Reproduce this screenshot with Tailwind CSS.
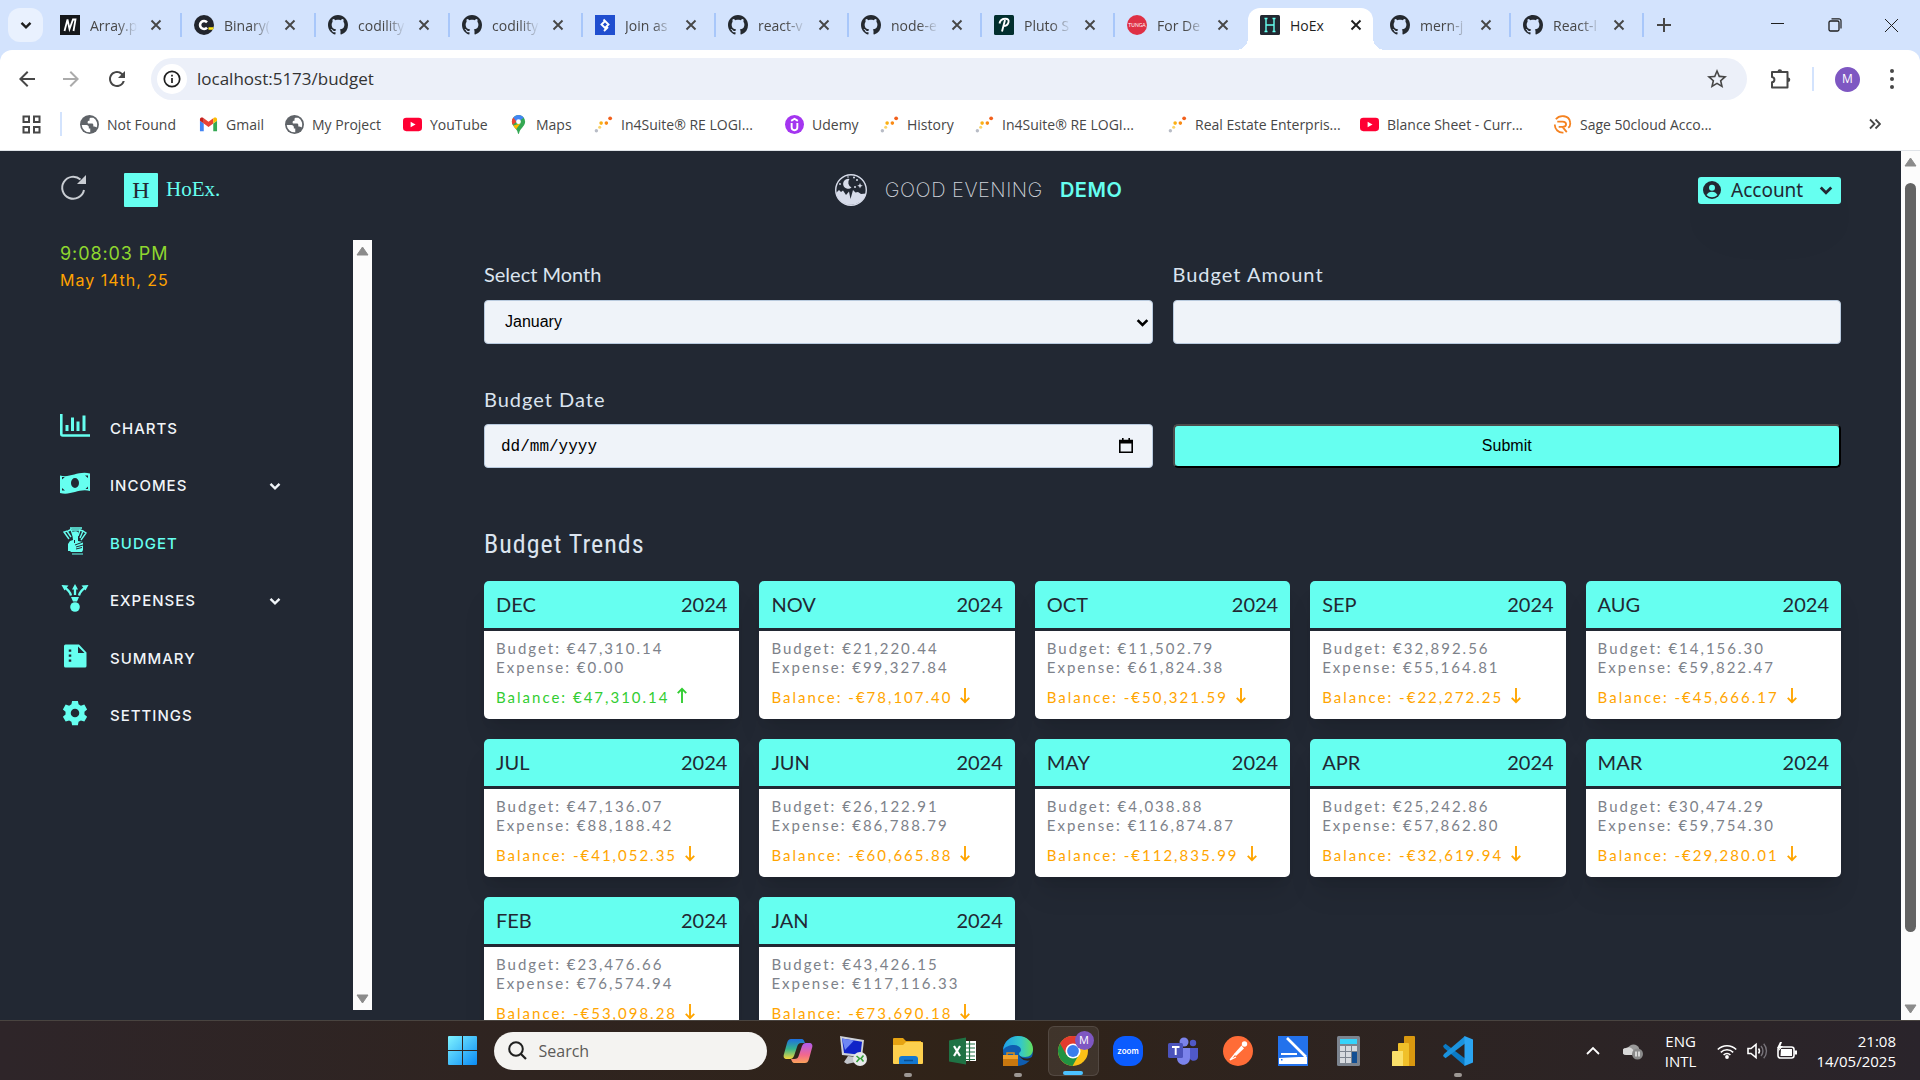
<!DOCTYPE html>
<html lang="en">
<head>
<meta charset="utf-8">
<title>HoEx</title>
<script src="https://cdn.jsdelivr.net/npm/@tailwindcss/browser@4"></script>
</head>
<body class="flex h-screen flex-col overflow-hidden bg-white font-['Open_Sans',sans-serif]">

<svg class="hidden" aria-hidden="true">
  <symbol id="github" viewBox="0 0 16 16"><path fill="#24292f" d="M8 0C3.58 0 0 3.58 0 8c0 3.54 2.29 6.53 5.47 7.59.4.07.55-.17.55-.38 0-.19-.01-.82-.01-1.49-2.01.37-2.53-.49-2.69-.94-.09-.23-.48-.94-.82-1.13-.28-.15-.68-.52-.01-.53.63-.01 1.08.58 1.23.82.72 1.21 1.87.87 2.33.66.07-.52.28-.87.51-1.07-1.78-.2-3.64-.89-3.64-3.95 0-.87.31-1.59.82-2.15-.08-.2-.36-1.02.08-2.12 0 0 .67-.21 2.2.82.64-.18 1.32-.27 2-.27s1.36.09 2 .27c1.53-1.04 2.2-.82 2.2-.82.44 1.1.16 1.92.08 2.12.51.56.82 1.27.82 2.15 0 3.07-1.87 3.75-3.65 3.95.29.25.54.73.54 1.48 0 1.07-.01 1.93-.01 2.2 0 .21.15.46.55.38A8.01 8.01 0 0 0 16 8c0-4.42-3.58-8-8-8z"/></symbol>
  <symbol id="medium" viewBox="0 0 20 20"><rect width="20" height="20" fill="#15171a"/><path d="M4.500 16 7.500 4.500 9.500 14 13 4.500h2.500L13.500 16" fill="none" stroke="#fff" stroke-width="1.800"/></symbol>
  <symbol id="codility" viewBox="0 0 20 20"><circle cx="10" cy="10" r="10" fill="#22252d"/><path d="M13 7.300a4 4 0 1 0 0 5.400" fill="none" stroke="#fff" stroke-width="2.600"/><path d="M14.500 12.300h5.200l-.8 2.500h-4.400z" fill="#ffe81a"/></symbol>
  <symbol id="toptal" viewBox="0 0 20 20"><rect width="20" height="20" fill="#204ecf"/><path d="m8.500 4.500 5 5-3.500 3.500-3.500-3.500L10 6M9 16l4-4" fill="none" stroke="#fff" stroke-width="1.900"/></symbol>
  <symbol id="pluto" viewBox="0 0 20 20"><rect width="20" height="20" rx="1.500" fill="#022f2e"/><path d="M8 16.500 11 5M5.500 8.500C6 5 9 3.700 11.500 3.700c2.500 0 3.500 1.500 3 3.500-.6 2.400-2.800 3.800-5.300 3.800" fill="none" stroke="#fff" stroke-width="1.900"/></symbol>
  <symbol id="tunga" viewBox="0 0 20 20"><circle cx="10" cy="10" r="10" fill="#df3045"/><text x="10" y="12" text-anchor="middle" font-size="5" font-family="Lato" fill="#fff">TUNGA</text></symbol>
  <symbol id="hoex" viewBox="0 0 20 20"><rect width="20" height="20" rx="1.500" fill="#222831"/><path d="M6 3.500v13M14 3.500v13M6 10h8M4.500 3.500h3M12.500 3.500h3M4.500 16.500h3M12.500 16.500h3" stroke="#66fff0" stroke-width="1.400"/></symbol>
  <symbol id="x" viewBox="0 0 12 12"><path d="m1.500 1.500 9 9m0-9-9 9" fill="none" stroke="currentColor" stroke-width="1.900"/></symbol>
  <symbol id="chev" viewBox="0 0 12 12"><path d="m1.500 3.800 4.500 4.500 4.500-4.500" fill="none" stroke="currentColor" stroke-width="2.400"/></symbol>
  <symbol id="globe" viewBox="0 0 20 20"><circle cx="10" cy="10" r="10" fill="#5f6368"/><path fill="#fff" d="M1.800 10.500h5c1.500 0 2.500 1 2.500 2.300v1.400h1.500v4a8.300 8.300 0 0 1-9-7.700zM8 7.500c0-1 .8-1.500 2-1.500V4.500c0-1 .7-1.500 2-1.500h2a8.300 8.300 0 0 1 3.500 10.200c-1-.7-2-1-3.500-1V10.500c0-1-.6-1.500-2-1.500H9C8.300 9 8 8.500 8 7.500z"/></symbol>
  <symbol id="gmail" viewBox="0 0 20 20"><path fill="#4285f4" d="M1 17h4V9L1 6z"/><path fill="#34a853" d="M15 17h4V6l-4 3z"/><path fill="#ea4335" d="m5 3.500 5 3.700 5-3.700V9l-5 3.700L5 9z"/><path fill="#c5221f" d="M1 4.500C1 2.700 3 2 4.300 3L5 3.500V9L1 6z"/><path fill="#fbbc04" d="M19 4.500C19 2.700 17 2 15.700 3l-.7.5V9l4-3z"/></symbol>
  <symbol id="yt" viewBox="0 0 20 20"><rect y="3" width="20" height="14" rx="3.500" fill="#ff0033"/><path fill="#fff" d="m8 7 5.200 3L8 13z"/></symbol>
  <symbol id="maps" viewBox="0 0 20 20"><path fill="#34a853" d="M10 20c-.6 0-.8-2-1.500-3.500C7 13.500 3 11 3 7a7 7 0 0 1 14 0c0 4-4 6.500-5.500 9.500C10.800 18 10.600 20 10 20z"/><path fill="#fbbc04" d="M4.500 11 12 9l-4.500 6C6.500 13.700 5.200 12.500 4.500 11z"/><path fill="#ea4335" d="M4.600 2.600 9 6 4 10.500C2.500 8 2.700 4.800 4.600 2.600z"/><path fill="#4285f4" d="M4.600 2.600C7.400-.9 13-.9 15.500 2.800L8.500 8z"/><circle cx="10" cy="7" r="2.500" fill="#fff"/></symbol>
  <symbol id="dots" viewBox="0 0 20 20"><circle cx="2.500" cy="16.500" r="1.800" fill="#b8bcc6"/><circle cx="6" cy="13" r="1.600" fill="#fbd46a"/><circle cx="7.500" cy="8.500" r="1.900" fill="#fbb013"/><circle cx="13" cy="8.500" r="1.900" fill="#f98a14"/><circle cx="17" cy="3.500" r="2" fill="#f2601c"/></symbol>
  <symbol id="udemy" viewBox="0 0 20 20"><circle cx="10" cy="10" r="10" fill="#a435f0"/><path d="M6.500 6.200 10 4l3.500 2.200M7 8.500V13a3 3 0 0 0 6 0V8.500" fill="none" stroke="#fff" stroke-width="2"/></symbol>
  <symbol id="sage" viewBox="0 0 20 20"><path d="M3 4.500C7-.5 17 0 18 7.500c.5 3-.5 5-2 6M4.500 7H10c5 0 5 5.500 0 5.500H6M10 12.500l4.500 5.500M2 10c-.5 5 4 9 9 8.500" fill="none" stroke="#f58220" stroke-width="1.900"/></symbol>
  <symbol id="up" viewBox="0 0 12 18"><path d="M6 17V2M1.500 6.500 6 2l4.500 4.500" fill="none" stroke="currentColor" stroke-width="2"/></symbol>
  <symbol id="down" viewBox="0 0 12 18"><path d="M6 1v15M1.500 11.500 6 16l4.500-4.500" fill="none" stroke="currentColor" stroke-width="2"/></symbol>
</svg>

<!-- Browser tabs -->
<header class="flex h-[50px] shrink-0 items-stretch bg-[#d3e3fd] text-[#474747]">
  <div class="flex w-12 shrink-0 items-center pl-2"><button aria-label="Search tabs" class="flex h-[34px] w-[35px] items-center justify-center rounded-xl bg-[#e9f1fe] text-[#1f1f1f]"><svg class="size-3"><use href="#chev"/></svg></button></div>
  <div id="tabs" class="flex"></div>
  <button aria-label="New tab" class="flex w-10 items-center justify-center"><svg class="size-[14px]" viewBox="0 0 14 14"><path d="M7 0v14M0 7h14" stroke="#474747" stroke-width="2"/></svg></button>
  <div class="ml-auto flex text-[#1f1f1f]">
    <button aria-label="Minimize" class="flex w-[57px] items-center justify-center pb-1"><svg class="size-[13px]" viewBox="0 0 13 13"><path d="M0 6.500h13" stroke="currentColor"/></svg></button>
    <button aria-label="Restore" class="flex w-[57px] items-center justify-center"><svg class="size-[14px]" viewBox="0 0 14 14"><rect x="1" y="3" width="10" height="10" rx="1.500" fill="none" stroke="currentColor" stroke-width="1.300"/><path d="M3.500.8H11a2 2 0 0 1 2 2v7.700" fill="none" stroke="currentColor" stroke-width="1.200"/></svg></button>
    <button aria-label="Close" class="flex w-[57px] items-center justify-center"><svg class="size-[13px]" viewBox="0 0 13 13"><path d="m0 0 13 13M13 0 0 13" stroke="currentColor"/></svg></button>
  </div>
</header>

<!-- Toolbar -->
<div class="shrink-0 bg-[#d3e3fd]">
<nav class="flex h-[58px] items-center rounded-t-xl bg-white text-[#474747]" aria-label="Browser toolbar">
  <button aria-label="Back" class="ml-[7px] flex w-10 justify-center"><svg class="size-6" viewBox="0 0 24 24"><path fill="#474747" d="M20 11H7.830l5.590-5.590L12 4l-8 8 8 8 1.410-1.410L7.830 13H20v-2z"/></svg></button>
  <button aria-label="Forward" class="ml-1 flex w-10 justify-center"><svg class="size-6" viewBox="0 0 24 24"><path fill="#ababab" d="M4 11h12.170l-5.590-5.590L12 4l8 8-8 8-1.410-1.410L16.170 13H4v-2z"/></svg></button>
  <button aria-label="Reload" class="ml-[6px] flex w-10 justify-center"><svg class="size-6" viewBox="0 0 24 24"><path fill="#474747" d="M17.650 6.350A7.958 7.958 0 0 0 12 4c-4.420 0-7.990 3.580-7.990 8s3.570 8 7.990 8c3.730 0 6.840-2.550 7.730-6h-2.080A5.990 5.990 0 0 1 12 18c-3.310 0-6-2.690-6-6s2.690-6 6-6c1.660 0 3.140.69 4.220 1.780L13 11h7V4l-2.350 2.350z"/></svg></button>
  <div class="ml-[14px] flex h-[42px] flex-1 items-center rounded-full bg-[#ecf0f9] pr-[18px] pl-[6px]">
    <span class="flex size-[30px] items-center justify-center rounded-full bg-white"><svg class="size-[18px]" viewBox="0 0 18 18"><circle cx="9" cy="9" r="7.700" fill="none" stroke="#1f1f1f" stroke-width="1.700"/><path d="M9 8v5M9 4.700v1.800" stroke="#1f1f1f" stroke-width="1.700"/></svg></span>
    <input aria-label="Address" value="localhost:5173/budget" class="ml-[10px] flex-1 bg-transparent text-[17px] text-[#333] outline-none">
    <svg class="size-6" viewBox="0 0 24 24"><path fill="#474747" d="M22 9.240l-7.190-.62L12 2 9.190 8.630 2 9.240l5.460 4.730L5.820 21 12 17.270 18.180 21l-1.630-7.030L22 9.240zM12 15.400l-3.760 2.270 1-4.280-3.320-2.880 4.380-.38L12 6.100l1.710 4.040 4.380.38-3.320 2.880 1 4.280L12 15.400z"/></svg>
  </div>
  <button aria-label="Extensions" class="ml-5 flex w-7 justify-center"><svg class="size-6" viewBox="0 0 24 24"><path d="M3 5h15.500v15.500H3v-5.200c3.200-.6 3.200-4.600 0-5.200z" fill="none" stroke="#474747" stroke-width="2" stroke-linejoin="round"/><path fill="#474747" d="M8.500 4.500a2.300 2.300 0 0 1 4.600 0zM19 10.500a2.300 2.300 0 0 1 0 4.600z"/></svg></button>
  <span class="ml-[17px] h-6 w-[2px] bg-[#d3e3fd]"></span>
  <span class="ml-[21px] flex size-[25px] items-center justify-center rounded-full bg-[#7e57c2] text-xs text-white">M</span>
  <button aria-label="Menu" class="ml-1 flex w-14 justify-center"><svg class="h-5 w-1" viewBox="0 0 4 20"><g fill="#474747"><circle cx="2" cy="2" r="2"/><circle cx="2" cy="10" r="2"/><circle cx="2" cy="18" r="2"/></g></svg></button>
</nav>
</div>

<!-- Bookmarks -->
<nav class="flex h-[43px] shrink-0 items-center border-b border-[#dfe3e8] pb-[10px] text-[14px] text-[#474747]" aria-label="Bookmarks">
  <button aria-label="Apps" class="ml-[22px]"><svg class="size-[19px]" viewBox="0 0 19 19"><g fill="none" stroke="#474747" stroke-width="2"><rect x="1.500" y="1.500" width="5.500" height="5.500"/><rect x="12" y="1.500" width="5.500" height="5.500"/><rect x="1.500" y="12" width="5.500" height="5.500"/><rect x="12" y="12" width="5.500" height="5.500"/></g></svg></button>
  <span class="mr-[18px] ml-[19px] h-6 w-[2px] bg-[#d3e3fd]"></span>
  <div id="marks" class="flex"></div>
  <button aria-label="More bookmarks" class="mr-[39px] ml-auto"><svg class="size-3" viewBox="0 0 12 12"><path d="m1 1.500 4.500 4.500L1 10.500m5.500-9L11 6l-4.500 4.500" fill="none" stroke="#474747" stroke-width="1.800"/></svg></button>
</nav>

<!-- HoEx app -->
<div class="flex min-h-0 flex-1 overflow-hidden bg-[#222833]">
  <div class="flex min-w-0 flex-1 flex-col px-[60px]">
    <header class="mb-[11px] grid h-[78px] shrink-0 grid-cols-[1fr_auto_1fr] items-center">
      <div class="flex items-center">
        <button aria-label="Refresh" class="mr-[36px] pb-[6px]"><svg class="size-7" viewBox="0 0 28 28"><path d="M20.500 6.500A11 11 0 1 0 24 17" fill="none" stroke="#c9cdd3" stroke-width="2"/><path d="M26 2v9h-9z" fill="#c9cdd3"/></svg></button>
        <a href="#" class="flex items-center gap-2 font-['Liberation_Serif',serif] text-[21px] text-[#66fff0]"><span class="flex size-[34px] items-center justify-center rounded-[1px] bg-[#66fff0] text-2xl text-[#222833]">H</span>HoEx.</a>
      </div>
      <div class="flex items-center pl-14 font-['Inter',sans-serif] text-[20px]">
        <svg class="mr-[18px] size-8" viewBox="0 0 32 32"><circle cx="16" cy="16" r="15.300" fill="none" stroke="#d7dcea" stroke-width="1.400"/><path d="M1 19 4 16l2 2 2-1.500 3 4.500 3-3.500 1.500 7.500 2.500-9 2.500 2.500 2.500-.5 3 2 5-.5a15.500 15.500 0 0 1-30-.5z" fill="#d7dcea"/><path d="M14.500 5a5 5 0 1 0 2 8.500A5.500 5.500 0 0 1 14.500 5z" fill="#d7dcea"/><path d="m25 9 .8 2 2 .8-2 .8-.8 2-.8-2-2-.8 2-.8z" fill="#d7dcea"/><g fill="#d7dcea"><circle cx="19" cy="3.500" r="1"/><circle cx="22" cy="6" r="1"/><circle cx="20" cy="13" r="1"/><circle cx="5" cy="10" r=".9"/><circle cx="13" cy="3" r=".8"/></g></svg>
        <span class="mr-[17px] font-extralight tracking-wide text-[#cfd3da]">GOOD EVENING</span><span class="font-semibold tracking-wide text-[#66fff0]">DEMO</span>
      </div>
      <button class="flex h-[27px] w-[143px] items-center justify-self-end rounded-[3px] bg-[#66fff0] px-[5px] font-['Noto_Sans',sans-serif] text-[19px] text-[#222833] shadow-2xl"><svg class="mr-[10px] size-[18px]" viewBox="0 0 18 18"><circle cx="9" cy="9" r="9" fill="#222833"/><circle cx="9" cy="6.700" r="3" fill="#66fff0"/><path d="M3.500 14a6.200 6.200 0 0 1 11 0A8 8 0 0 1 3.500 14z" fill="#66fff0"/></svg>Account<svg class="mr-[3px] ml-auto size-[14px]"><use href="#chev"/></svg></button>
    </header>

    <div class="flex min-h-0 flex-1">
      <aside class="mb-[10px] flex w-[312px] shrink-0 font-['Inter',sans-serif]">
        <div class="flex-1 pr-[72px]">
          <p class="text-[18px] leading-[27px] tracking-wider text-[#8fd62f]">9:08:03 PM</p>
          <p class="text-[16px] leading-[27px] tracking-[1px] text-[#ffa200]">May 14th, 25</p>
          <nav id="side" class="mt-[106px] grid h-[345px] auto-rows-fr text-[15px] font-medium tracking-[1px] text-[#f1f5f9]" aria-label="Main">
            <a href="#" class="flex items-center"><svg class="mr-5 mb-[6px] h-7 w-[30px]" viewBox="0 0 30 28"><path d="M1.300 2v20a1.500 1.500 0 0 0 1.500 1.500H30" fill="none" stroke="#66fff0" stroke-width="2.600"/><path d="M7 13v6M12.500 5.500V19M18 9.500V19M24 3.500V19" stroke="#66fff0" stroke-width="3"/></svg>CHARTS</a>
            <a href="#" class="flex items-center"><svg class="mr-5 mb-[6px] h-7 w-[30px]" viewBox="0 0 30 28"><path fill="#66fff0" fill-rule="evenodd" d="M0 6.500c10 3 18-5 30-2v17.500c-11-3-19 5-30 2zM15 9a4 5 0 1 0 0 10 4 5 0 0 0 0-10zM2 10.500 4.800 8H2zM2 21.500h3L2 19zM28 6.500h-3L28 9zM28 20v-2.500L25.500 20z"/></svg>INCOMES<svg class="ml-auto size-3"><use href="#chev"/></svg></a>
            <a href="#" class="flex items-center text-[#66fff0]"><svg class="mr-5 mb-[6px] h-7 w-[30px]" viewBox="0 0 30 28"><g fill="none" stroke="#66fff0" stroke-width="1.400"><path d="M9 12 4 5l3-1 4 6M8 4l3-1.500 2 6M10 1h12M12 3h9M18 9l2-6 3 1-3 7M23 4l3 2-5 7"/></g><path fill="#66fff0" d="M12 5c2-1 5-1 6 0v9l5 1v8l-1 2H11l-1-1H8v-7l2-3 3-1z"/><path d="m15 18 8-3m-7 5 7-2m-7 4 6-1.500M14.500 16v-3" stroke="#222833" stroke-width="1"/><path d="M12 27h11" stroke="#66fff0"/></svg>BUDGET</a>
            <a href="#" class="flex items-center"><svg class="mr-5 mb-[6px] h-7 w-[30px]" viewBox="0 0 30 28"><g fill="none" stroke="#66fff0" stroke-width="2.300"><path d="M11 11.500C10 8 8 5.500 4.500 3.500M15 11V4M19 11.500c1-3.500 3-6 6.500-8"/></g><path fill="#66fff0" d="m1.500 1 7 .5-4 5zM15 0l3 5.500h-6zM28.500 1l-7 .5 4 5zM11 13h8l-2 4.500h-4z"/><circle cx="15" cy="23" r="4.800" fill="#66fff0"/></svg>EXPENSES<svg class="ml-auto size-3"><use href="#chev"/></svg></a>
            <a href="#" class="flex items-center"><svg class="mr-5 mb-[6px] h-7 w-[30px]" viewBox="0 0 30 28"><path fill="#66fff0" fill-rule="evenodd" d="M5.500 2.500H19l7.500 8V24a1.500 1.500 0 0 1-1.500 1.500H5.500A1.500 1.500 0 0 1 4 24V4a1.500 1.500 0 0 1 1.500-1.500zM18 4.500V11h6.500z"/><path d="M10 7.500v2.300M10 12.500v2.300M10 17.500v2.300" stroke="#222833" stroke-width="2.500"/></svg>SUMMARY</a>
            <a href="#" class="flex items-center"><svg class="mr-5 mb-[6px] h-7 w-[30px]" viewBox="-1 0 26 24"><path fill="#66fff0" fill-rule="evenodd" d="M9.500 1.500h5l.6 3 2 1.200 3-1 2.400 4.200-2.300 2v2.300l2.300 2-2.400 4.200-3-1-2 1.200-.6 3h-5l-.6-3-2-1.200-3 1-2.400-4.200 2.300-2v-2.300l-2.300-2 2.400-4.200 3 1 2-1.200zM12 8.300a3.700 3.700 0 1 0 0 7.400 3.700 3.700 0 0 0 0-7.400z"/></svg>SETTINGS</a>
          </nav>
        </div>
        <div class="flex w-[19px] flex-col items-center justify-between bg-[#fcfcfc] py-[6px]">
          <svg class="h-[10px] w-[13px]" viewBox="0 0 13 10"><path d="M6.500 1 12 9H1z" fill="#8b8b8b" stroke="#8b8b8b" stroke-linejoin="round"/></svg>
          <svg class="h-[10px] w-[13px]" viewBox="0 0 13 10"><path d="M6.500 9 12 1H1z" fill="#8b8b8b" stroke="#8b8b8b" stroke-linejoin="round"/></svg>
        </div>
      </aside>

      <main class="ml-28 min-w-0 flex-1 pt-[19px] font-['Lato',sans-serif]">
        <form class="grid grid-cols-2 gap-x-5 gap-y-10 text-[20px] text-[#dbe4ef]">
          <div><label for="month" class="mb-[11px] block leading-[30px]">Select Month</label>
            <div class="relative"><select id="month" class="block h-11 w-full appearance-none rounded-[4px] border border-[#b9cade] bg-[#eff3f9] px-5 font-['Liberation_Sans',sans-serif] text-base text-black"><option>January</option><option>February</option><option>March</option></select><svg class="absolute top-4 right-1 size-[13px] text-black"><use href="#chev"/></svg></div></div>
          <div><label for="amount" class="mb-[11px] block leading-[30px] tracking-[1px]">Budget Amount</label>
            <input id="amount" class="block h-11 w-full rounded-[4px] border border-[#b9cade] bg-[#eff3f9] px-4 text-base text-black"></div>
          <div><label for="date" class="mb-[10px] block leading-[30px] tracking-[1px]">Budget Date</label>
            <div class="relative"><input id="date" placeholder="dd/mm/yyyy" class="block h-11 w-full rounded-[4px] border border-[#b9cade] bg-[#eff3f9] px-4 pt-[2px] font-['Liberation_Mono',monospace] text-base text-black placeholder:text-black"><svg class="absolute top-[14px] right-5 h-[15px] w-[14px]" viewBox="0 0 14 15"><path d="M.8 2.500h12.400v11.700H.8z" fill="none" stroke="#000" stroke-width="1.600"/><path d="M0 2h14v3.500H0zM3 0h1.600v2H3zM9.400 0H11v2H9.400z"/></svg></div></div>
          <div class="flex items-end"><button type="button" class="h-11 w-full rounded-[5px] border-2 border-t-[#4c4c4c] border-r-black border-b-black border-l-[#4c4c4c] bg-[#66fff0] font-['Liberation_Sans',sans-serif] text-base text-black">Submit</button></div>
        </form>
        <h1 class="mt-[60px] mb-5 font-['Roboto_Condensed','Roboto',sans-serif] text-[26px] leading-[33px] tracking-[1px] text-[#dbe4ef]">Budget Trends</h1>
        <section id="cards" class="grid grid-cols-5 gap-5"></section>
      </main>
    </div>
  </div>
  <div class="flex w-[19px] shrink-0 flex-col items-center bg-[#fcfcfc] py-[6px]">
    <svg class="h-[10px] w-[13px]" viewBox="0 0 13 10"><path d="M6.500 1 12 9H1z" fill="#8b8b8b" stroke="#8b8b8b" stroke-linejoin="round"/></svg>
    <div class="mt-4 mb-[72px] w-[11px] flex-1 rounded-full bg-[#636363]"></div>
    <svg class="h-[10px] w-[13px]" viewBox="0 0 13 10"><path d="M6.500 9 12 1H1z" fill="#8b8b8b" stroke="#8b8b8b" stroke-linejoin="round"/></svg>
  </div>
</div>

<!-- Taskbar -->
<footer class="grid h-[60px] shrink-0 grid-cols-[1fr_auto_1fr] items-center border-t border-[#494440] bg-linear-to-r from-[#2e2529] via-[#302318] to-[#2a242b] text-white">
  <span></span>
  <div class="flex h-full items-center">
    <button aria-label="Start" class="flex w-[55px] justify-center"><svg class="size-[29px]" viewBox="0 0 29 29"><defs><linearGradient id="win" x2="1" y2="1"><stop stop-color="#7ff3ff"/><stop offset="1" stop-color="#0a8bf5"/></linearGradient></defs><path fill="url(#win)" d="M0 1a1 1 0 0 1 1-1h13v14H0zM15 0h13a1 1 0 0 1 1 1v13H15zM0 15h14v14H1a1 1 0 0 1-1-1zM15 15h14v13a1 1 0 0 1-1 1H15z"/></svg></button>
    <label class="mx-1 flex h-[38px] w-[273px] items-center rounded-full bg-[#f4f3f1] px-[14px]"><svg class="size-[19px]" viewBox="0 0 19 19"><circle cx="8" cy="8" r="6.800" fill="none" stroke="#1f1f1f" stroke-width="2"/><path d="m13 13 5 5" stroke="#1f1f1f" stroke-width="2.200"/></svg><input aria-label="Search" placeholder="Search" class="ml-3 w-40 bg-transparent text-[16px] placeholder:text-[#5c5a58]"></label>
    <button aria-label="Copilot" class="flex w-[55px] justify-center"><svg class="size-[30px]" viewBox="0 0 30 30"><defs><linearGradient id="cpa" x2="0" y2="1"><stop stop-color="#1d6fe0"/><stop offset=".5" stop-color="#35b48c"/><stop offset="1" stop-color="#f5d53c"/></linearGradient><linearGradient id="cpb" x2="0" y2="1"><stop stop-color="#b05cf0"/><stop offset=".6" stop-color="#f2688c"/><stop offset="1" stop-color="#fba35a"/></linearGradient></defs><path fill="url(#cpa)" d="M8 3h10c3 0 3 2 4 4h-4c-2 0-3 1-4 4l-3 9c-1 2-2 3-4 3H4c-3 0-4-2-3-5L4 7c1-3 2-4 4-4z"/><path fill="url(#cpb)" d="M22 27H12c-3 0-3-2-4-4h3c3 0 4-1 5-4l3-9c1-2 2-3 4-3h3c3 0 4 2 3 5l-3 11c-1 3-2 4-4 4z"/></svg></button>
    <button aria-label="Remote desktop" class="flex w-[55px] justify-center"><svg class="size-[30px]" viewBox="0 0 30 30"><path fill="#cfd3da" d="m2 0 24 4-2 17L4 19z"/><path fill="#1023c8" d="m4 2.500 20 3.300-1.500 13L6 17z"/><path fill="#6e87f5" d="m4 2.500 12 2L7 14z"/><path fill="#c3c6cc" d="m10 20 8 1v5l-9 2-3-2z"/><circle cx="22" cy="23" r="7" fill="#e6e8ea"/><path d="m18.500 20 3 2.500-3 3.500m7-6.500-2.500 3 2.500 3" fill="none" stroke="#37a23a" stroke-width="1.600"/></svg></button>
    <button aria-label="File Explorer" class="relative flex w-[55px] justify-center"><svg class="h-[28px] w-[30px]" viewBox="0 0 30 28"><path fill="#e6a312" d="M0 2a1 1 0 0 1 1-1h9l3 3h15v7H0z"/><path fill="#fdd04e" d="M0 8h10l3-3h16a1 1 0 0 1 1 1v20a1 1 0 0 1-1 1H1a1 1 0 0 1-1-1z"/><path fill="#1378d1" d="M6 27v-5a3 3 0 0 1 3-3h13a3 3 0 0 1 3 3v5z"/><path d="M11 23.500h9" stroke="#0a4f91" stroke-width="1.500"/></svg><i class="absolute -bottom-[12px] h-1 w-2 rounded-full bg-[#9d9894]"></i></button>
    <button aria-label="Excel" class="flex w-[55px] justify-center"><svg class="size-7" viewBox="0 0 28 28"><path fill="#fff" d="M14 4h13v20H14z"/><path d="M15 7h11M15 11h11M15 15h11M15 19h11M15 22.500h11M20.500 4v20" stroke="#1f7244" stroke-width="1.200"/><path fill="#1f7244" d="m0 3.500 17-3v27l-17-3z"/><path d="m5 9 6 10m0-10L5 19" stroke="#fff" stroke-width="2.200"/></svg></button>
    <button aria-label="Edge" class="relative flex w-[55px] justify-center"><svg class="size-[30px]" viewBox="0 0 30 30"><defs><linearGradient id="edg"><stop stop-color="#1f9fe8"/><stop offset=".6" stop-color="#35c8c8"/><stop offset="1" stop-color="#64e05c"/></linearGradient></defs><circle cx="15" cy="15" r="15" fill="#0f5db0"/><path fill="url(#edg)" d="M0 14C1 5 8 0 15 0c9 0 15 6 15 13 0 5-3 8-8 8-4 0-6-1-6-3s2-2 2-4c0-3-3-5-7-5-5 0-9 2-11 5z"/><path fill="#302318" d="M16 19c3 4 8 4.500 13 2l1 2-1.500 1c-5 1.500-10 .5-12.500-5z"/><rect y="19" width="15" height="11" fill="#c9780f"/><path fill="#f0a12c" d="M0 19h15v4H0z"/><path d="M4 19v-2h7v2" fill="none" stroke="#d98a1a" stroke-width="1.500"/></svg><i class="absolute -bottom-[11px] h-1 w-2 rounded-full bg-[#9d9894]"></i></button>
    <button aria-label="Chrome" class="relative mx-[2px] flex h-[50px] w-[51px] items-center justify-center rounded-md border border-white/10 bg-white/8"><svg class="size-[30px]" viewBox="0 0 30 30"><circle cx="15" cy="15" r="15" fill="#fbc116"/><path fill="#e33b2e" d="M15 15 2 7.500a15 15 0 0 1 26 0z"/><path fill="#229342" d="M2 7.500a15 15 0 0 0 12.500 22.500L21 18.500 15 15z"/><path fill="#e33b2e" d="M2 7.500h26V8.500H15L8.500 19z"/><circle cx="15" cy="15" r="7.500" fill="#fff"/><circle cx="15" cy="15" r="5.900" fill="#3b7ded"/></svg><span class="absolute top-1 right-1 flex size-[19px] items-center justify-center rounded-full bg-[#7e57c2] text-[11px]">M</span><i class="absolute bottom-0 h-1 w-5 rounded-full bg-[#4cc2ff]"></i></button>
    <button aria-label="Zoom" class="flex w-[55px] justify-center"><span class="flex size-[30px] items-center justify-center rounded-[12px] bg-[#0b5cff] font-['Inter',sans-serif] text-[8px] font-semibold">zoom</span></button>
    <button aria-label="Teams" class="flex w-[55px] justify-center"><svg class="size-[30px]" viewBox="0 0 30 30"><circle cx="16" cy="6" r="4.500" fill="#7b83eb"/><circle cx="25" cy="7" r="3.200" fill="#5059c9"/><path fill="#5059c9" d="M20 12h10v9c0 4-6 5-8 2z"/><path fill="#7b83eb" d="M9 12h13v10c0 9-13 9-13 0z"/><rect y="7" width="15" height="15" rx="1.500" fill="#4b53bc"/><path d="M4 11h7.500M7.700 11v8" stroke="#fff" stroke-width="1.900"/></svg></button>
    <button aria-label="Postman" class="flex w-[55px] justify-center"><svg class="size-[30px]" viewBox="0 0 30 30"><circle cx="15" cy="15" r="15" fill="#ff6c37"/><circle cx="21.500" cy="8" r="2.700" fill="#fff"/><path d="m18.500 9.500 2.500 3-8 7.500-2-2z" fill="#fff"/><path d="m12 18-5 6 6-3" fill="none" stroke="#fff" stroke-width="1.300"/></svg></button>
    <button aria-label="Scan" class="flex w-[55px] justify-center"><svg class="size-[30px]" viewBox="0 0 30 30"><path fill="#2372ec" d="M0 0h30v30H0z"/><path d="M9 2 28 21" stroke="#fff" stroke-width="2.600"/><path fill="#fff" d="M3 17h16v2H3zM1 22l20-1h8v7H1z"/><path fill="#2372ec" d="M3 23h1.500v1.500H3z"/></svg></button>
    <button aria-label="Calculator" class="flex w-[55px] justify-center"><svg class="h-[30px] w-[23px]" viewBox="0 0 23 30"><rect width="23" height="30" rx="1.500" fill="#7c848f"/><path fill="#35d3fb" d="M3 3h17v5H3z"/><path fill="#d7dbe0" d="M3 10h5v5H3zM9 10h5v5H9zM15 10h5v5h-5zM3 16h5v5H3zM9 16h5v5H9zM3 22h5v5H3zM9 22h5v5H9z"/><path fill="#124f93" d="M15 16h5v11h-5z"/></svg></button>
    <button aria-label="Power BI" class="flex w-[55px] justify-center"><svg class="h-[30px] w-[23px]" viewBox="0 0 23 30"><path fill="#d9980f" d="M12 1a1 1 0 0 1 1-1h9a1 1 0 0 1 1 1v29H12z"/><path fill="#f0c02a" d="M6 8a1 1 0 0 1 1-1h9a1 1 0 0 1 1 1v22H6z"/><path fill="#fae06a" d="M0 16a1 1 0 0 1 1-1h10v15H0z"/></svg></button>
    <button aria-label="VS Code" class="relative flex w-[55px] justify-center"><svg class="size-[30px]" viewBox="0 0 30 30"><path fill="#0b7ac4" d="m0 10 2.500-2.200L22 22.500V30L1 12z"/><path fill="#1b93de" d="m0 20 2.500 2.200L22 7.500V0L1 18z"/><path fill="#2ba5f2" d="M21.500 0 30 3.500v23L21.500 30z"/></svg><i class="absolute -bottom-[11px] h-1 w-2 rounded-full bg-[#9d9894]"></i></button>
  </div>
  <div class="flex items-center justify-end pr-6 text-[15px] leading-5">
    <svg class="mr-[23px] h-[9px] w-[14px]" viewBox="0 0 14 9"><path d="m1 8 6-6 6 6" fill="none" stroke="#fff" stroke-width="1.800"/></svg>
    <svg class="mr-[22px] h-[18px] w-5" viewBox="0 0 20 18"><path fill="#9a9a9a" d="M5 6a6 6 0 0 1 11 0l1 6H5z"/><path fill="#d8d8d8" d="M3 13a3.500 3.500 0 0 1 0-7c3-2 6 0 8 3l-2 4z"/><circle cx="14.500" cy="12" r="5.500" fill="#8a8a8a"/><path d="M13 9.500v5M16 9.500v5" stroke="#fff" stroke-width="1.300"/></svg>
    <span class="mr-[21px] text-center">ENG<br>INTL</span>
    <svg class="mr-[10px] h-4 w-5" viewBox="0 0 20 16"><g fill="none" stroke="#fff" stroke-width="1.600"><path d="M.8 6.500a13 13 0 0 1 18.400 0M3.800 9.300a9 9 0 0 1 12.400 0M6.600 12a5 5 0 0 1 6.800 0"/></g><circle cx="10" cy="14" r="1.900" fill="#fff"/></svg>
    <svg class="mr-[9px] h-[18px] w-[21px]" viewBox="0 0 21 18"><path d="M1 6.500h3l5-4v13l-5-4H1z" fill="none" stroke="#fff" stroke-width="1.600"/><path d="M11.500 6.500a4 4 0 0 1 0 5" fill="none" stroke="#fff" stroke-width="1.500"/><path d="M14 4a7.500 7.500 0 0 1 0 10M16.700 1.700a11 11 0 0 1 0 14.600" fill="none" stroke="#77737a" stroke-width="1.400"/></svg>
    <svg class="mr-[19px] h-[18px] w-5" viewBox="0 0 20 18"><rect x="1" y="5" width="16" height="11" rx="2.500" fill="none" stroke="#fff" stroke-width="1.600"/><path fill="#fff" d="M4 7h11v7H3.500zM17.500 8.500H20v4h-2.500zM3 0 0 6h2.500L1 10l5-6H3.500L5 0z"/></svg>
    <span class="text-right">21:08<br>14/05/2025</span>
  </div>
</footer>

<script>
const tabs = [["medium","Array.p",134],["codility","Binary(",134],["github","codility",134],["github","codility",133],["toptal","Join as",133],["github","react-v",133],["github","node-e",133],["pluto","Pluto S",133],["tunga","For De",133],["hoex","HoEx",130],["github","mern-j",133],["github","React-l",133]];
document.getElementById("tabs").innerHTML = tabs.map(([icon, name, w], i) => {
  const active = name === "HoEx";
  return `<div class="relative flex shrink-0 items-center pl-3 ${active ? "text-[#1f1f1f]" : ""}" style="width:${w}px">
    ${active ? `<span class="absolute top-2 right-[5px] bottom-0 left-0 rounded-t-xl bg-white"></span><span class="absolute bottom-0 -left-3 size-3 bg-[radial-gradient(circle_at_0_0,transparent_12px,white_12px)]"></span><span class="absolute -right-[7px] bottom-0 size-3 bg-[radial-gradient(circle_at_100%_0,transparent_12px,white_12px)]"></span>` : ""}
    <svg class="relative size-5 shrink-0"><use href="#${icon}"/></svg>
    <span class="relative ml-[10px] w-[50px] text-[14px] whitespace-nowrap ${active ? "" : "mask-r-from-55% mask-r-to-95%"}">${name}</span>
    <button aria-label="Close tab" class="relative ml-[10px]"><svg class="size-3"><use href="#x"/></svg></button>
    ${i === 8 || active ? "" : `<span class="absolute right-0 h-6 w-[2px] bg-[#a8c7fa]"></span>`}
  </div>`;
}).join("");

const marks = [["globe","Not Found",119],["gmail","Gmail",86],["globe","My Project",118],["yt","YouTube",106],["maps","Maps",85],["dots","In4Suite® RE LOGI...",191],["udemy","Udemy",95],["dots","History",95],["dots","In4Suite® RE LOGI...",193],["dots","Real Estate Enterpris...",192],["yt","Blance Sheet - Curr...",193],["sage","Sage 50cloud Acco...",190]];
document.getElementById("marks").innerHTML = marks.map(([icon, name, w]) =>
  `<a href="#" class="flex items-center gap-2 whitespace-nowrap" style="width:${w}px"><svg class="size-[19px] shrink-0"><use href="#${icon}"/></svg>${name}</a>`).join("");

const cards = [["DEC","47,310.14","0.00","47,310.14"],["NOV","21,220.44","99,327.84","-78,107.40"],["OCT","11,502.79","61,824.38","-50,321.59"],["SEP","32,892.56","55,164.81","-22,272.25"],["AUG","14,156.30","59,822.47","-45,666.17"],["JUL","47,136.07","88,188.42","-41,052.35"],["JUN","26,122.91","86,788.79","-60,665.88"],["MAY","4,038.88","116,874.87","-112,835.99"],["APR","25,242.86","57,862.80","-32,619.94"],["MAR","30,474.29","59,754.30","-29,280.01"],["FEB","23,476.66","76,574.94","-53,098.28"],["JAN","43,426.15","117,116.33","-73,690.18"]];
document.getElementById("cards").innerHTML = cards.map(([m, b, e, bal]) => {
  const neg = bal[0] === "-";
  return `<article class="flex flex-col gap-[3px] rounded-[5px] shadow-xl">
    <h2 class="flex h-[47px] items-center justify-between rounded-t-[5px] bg-[#66fff0] px-3 pb-[2px] text-[20px] text-[#222833]"><span>${m}</span><span>2024</span></h2>
    <div class="h-[88px] rounded-b-[5px] bg-white px-3 pt-2 text-[15px] leading-[19px] tracking-[2px] whitespace-nowrap text-[#7d828a]">
      <p>Budget: €${b}</p><p>Expense: €${e}</p>
      <p class="mt-[10px] flex items-center ${neg ? "text-[#ffa500]" : "text-[#32cd32]"}">Balance: ${neg ? "-" : ""}€${bal.replace("-", "")}<svg class="mb-1 ml-[7px] h-[17px] w-3"><use href="${neg ? "#down" : "#up"}"/></svg></p>
    </div></article>`;
}).join("");
</script>
</body>
</html>
